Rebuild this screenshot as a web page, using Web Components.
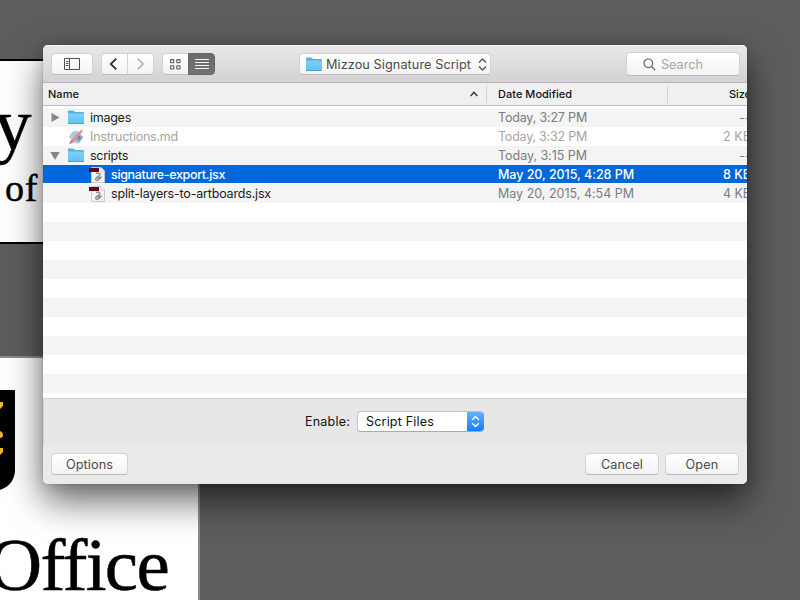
<!DOCTYPE html>
<html lang="en"><head><meta charset="utf-8"><title>Open Script</title>
<style>
html,body{margin:0;height:100%;overflow:hidden;background:#5d5d5d}
body{font:12.5px/19px Inter,"Liberation Sans",sans-serif;color:#1c1c1c;position:relative}
open-dialog{position:absolute;left:43px;top:45px}
</style></head><body>
<art-canvas></art-canvas>
<open-dialog></open-dialog>
<script>
const define=(name,html,init)=>customElements.define(name,class extends HTMLElement{
  connectedCallback(){
    if(this.shadowRoot)return;
    const t=document.createElement('template');t.innerHTML=html;
    this.attachShadow({mode:'open'}).append(t.content.cloneNode(true));
    if(init)init(this);
  }
});

/* Text run whose tracking is adjusted to the width given in "w". */
define('fit-text','<style>:host{display:inline-block;white-space:pre;flex:none}span{display:inline-block}</style><span><slot></slot></span>',el=>{
  const s=el.shadowRoot.querySelector('span'),w=+el.getAttribute('w');
  if(!w)return;
  const n=el.textContent.length;
  s.style.letterSpacing=((w-s.getBoundingClientRect().width)/n)+'px';
  el.style.width=w+'px';
});

define('folder-icon',`<style>:host{display:block;white-space:normal;width:16px;height:15px;flex:none}svg{display:block}</style>
<svg width="16" height="15"><defs><linearGradient id="g" x2="0" y2="1"><stop stop-color="#7dd0f8"/><stop offset="1" stop-color="#60c2f5"/></linearGradient></defs>
<path d="M0 1.5Q0 .5 1 .5H5.5L7 2H15Q16 2 16 3V14H0Z" fill="#58b0dc"/><path d="M0 3.5H16V13.2H0Z" fill="url(#g)"/><path d="M0 13.5H16" stroke="#4f9fc9"/></svg>`);

define('script-icon',`<style>:host{display:block;white-space:normal;width:16px;height:16px;flex:none}svg{display:block}</style>
<svg width="16" height="16"><path d="M2.5.5H12L15.5 4V15.5H2.5Z" fill="#f3f3f3" stroke="#c9c9c9"/><path d="M12 .5V4H15.5" fill="#fff" stroke="#bbb" stroke-width=".7"/><path d="M0 1H10V5H0Z" fill="#64001c"/>
<g fill="none" stroke="#888" stroke-width="1.3"><path d="M7 6.5Q11 5.5 11 8L7.5 10.5Q5.5 13 8 13.5Q10 13.5 12.5 9.5M8.5 12L11 9.5"/></g></svg>`);

define('markdown-icon',`<style>:host{display:block;white-space:normal;width:16px;height:16px;flex:none}svg{display:block}</style>
<svg width="16" height="16"><path d="M4 3L9 1.5 15.5 8 11 14.5 6 13.5 1 8Z" fill="#a9c9df"/><path d="M1 8L5 6 8 9 5 12Z" fill="#c1c9cf"/><path d="M9 7L13 6.5 14.5 9 11 13 8 11Z" fill="#7fa9c8"/><circle cx="11.3" cy="8.5" r="1.2" fill="#557e9f"/><path d="M13.2 .8L15 2 5.5 13 1.3 15.3 2.8 11.5Z" fill="#e98a8a"/><path d="M2.8 11.5L5 13.2 1.3 15.3Z" fill="#8c8588"/></svg>`);

define('push-button',`<style>:host{display:flex;align-items:center;justify-content:center;box-sizing:border-box;height:22px;border-radius:4px;border:1px solid #d3d2d3;border-bottom-color:#bcbbbc;background:linear-gradient(#fff,#f3f3f3);color:#4b4b4b;font-size:12.7px;flex:none}</style><slot></slot>`);

define('dialog-toolbar',`<style>
:host{display:flex;box-sizing:border-box;height:38px;padding:8px 7px 0 8px;border-bottom:1px solid #b5b2b5;background:linear-gradient(#ebe8eb,#d4d1d4);box-shadow:inset 0 1px #f5f3f5;align-items:flex-start}
svg{display:block;fill:none;flex:none}
.side{width:42px}.nav{width:27px;padding-right:2px}.back{margin-left:8px;border-radius:4px 0 0 4px}.fwd{margin-left:-1px;border-radius:0 4px 4px 0;padding-right:0}
.grid{margin-left:8px;width:26px;border-radius:4px 0 0 4px;border-right:0}
.list{width:27px;border-radius:0 4px 4px 0;background:linear-gradient(#6b696b,#747274);border-color:#666;}
.place{margin-left:84px;width:192px;gap:4px;justify-content:flex-start;box-sizing:border-box;padding-left:6px;border-radius:4px}
.search{margin-left:auto;width:114px;height:24px;justify-content:flex-start;padding-left:16px;gap:5px;color:#a6a6a6;margin-top:-1px}
</style>
<push-button class="side"><svg width="16" height="12" stroke="#505050"><path d="M.5.5H15.5V11.5H.5ZM5.5.5V11.5M2 3.5H4.5M2 5.5H4.5M2 7.5H4.5"/></svg></push-button>
<push-button class="nav back"><svg width="9" height="12" stroke="#353035" stroke-width="1.8"><path d="M7.3.6L1.8 6 7.3 11.4"/></svg></push-button>
<push-button class="nav fwd"><svg width="9" height="12" stroke="#b1b0b1" stroke-width="1.5"><path d="M1.7.6L7.2 6 1.7 11.4"/></svg></push-button>
<push-button class="grid"><svg width="11" height="11" stroke="#555" stroke-width="1.1"><rect x=".6" y=".6" width="3.2" height="3.2" rx=".5"/><rect x="6.8" y=".6" width="3.2" height="3.2" rx=".5"/><rect x=".6" y="6.8" width="3.2" height="3.2" rx=".5"/><rect x="6.8" y="6.8" width="3.2" height="3.2" rx=".5"/></svg></push-button>
<push-button class="list"><svg width="14" height="10" stroke="#f3f3f3"><path d="M0 .5H14M0 3.5H14M0 6.5H14M0 9.5H14"/></svg></push-button>
<push-button class="place"><folder-icon></folder-icon><fit-text w="145">Mizzou Signature Script</fit-text><svg width="9" height="13" stroke="#555" stroke-width="1.4" style="margin-left:3px"><path d="M1 4.5L4.5 1 8 4.5M1 8.5L4.5 12 8 8.5"/></svg></push-button>
<push-button class="search"><svg width="13" height="13" stroke="#606060" stroke-width="1.2"><circle cx="5.3" cy="5.3" r="4.3"/><path d="M8.5 8.5L12.2 12.2"/></svg><fit-text w="42">Search</fit-text></push-button>`);

define('column-header',`<style>
:host{display:flex;height:22px;border-bottom:1px solid #bdbdbd;background:#f0f0f0;font-size:11px;line-height:22px;color:#111;overflow:hidden;font-weight:450}
div{display:flex;flex:none;align-items:center;position:relative}
.n{width:443px;padding-left:5px;box-sizing:border-box}.n svg{margin-left:auto;margin-right:8px}
i{width:1px;height:18px;background:#d2d2d2;flex:none;align-self:center}
.d{width:180px;padding-left:11px;box-sizing:border-box}.s{padding-left:61px}
</style><div class="n"><fit-text w="31" style="font-weight:550">Name</fit-text><svg width="8" height="6" fill="none" stroke="#333" stroke-width="1.4"><path d="M.7 5L4 1.4 7.3 5"/></svg></div><i></i><div class="d"><fit-text w="74">Date Modified</fit-text></div><i></i><div class="s"><fit-text w="22">Size</fit-text></div>`);

define('file-row',`<style>
:host{display:flex;align-items:center;height:19px;overflow:hidden;white-space:pre;flex:none;background:#fff;color:#1b1b1b}
:host(:nth-child(odd)){background:#f4f4f4}
:host([selected]){background:linear-gradient(#0068da 18px,#fff 18px);color:#fff;font-weight:500}
.t{width:25px;flex:none;display:flex;justify-content:center;box-sizing:border-box;padding-right:1px}
.name{display:flex;align-items:center;width:430px;flex:none;gap:6px}
:host([child]) .name{padding-left:21px;width:409px}
.date{width:177px;flex:none;color:#7c7c7c}.size{width:76px;text-align:right;color:#7c7c7c;flex:none}
:host([dim]),:host([dim]) .date,:host([dim]) .size{color:#a4a4a4}
:host([selected]) .date,:host([selected]) .size{color:#fff}
svg{display:block;fill:#858585}
</style><div class="t"></div><div class="name"><slot name="icon"></slot><slot></slot></div><div class="date"><slot name="date"></slot></div><div class="size"><slot name="size"></slot></div>`,el=>{
  const a=el.getAttribute('arrow');
  if(a)el.shadowRoot.querySelector('.t').innerHTML='<svg width="10" height="9"><path d="'+(a==='open'?'M.3 1H9.7L5 9Z':'M1.5 0V9L9.5 4.5Z')+'"/></svg>';
});

define('file-list',`<style>:host{display:block;height:290px;padding-top:2px;background:#fff;overflow:hidden}.rows{display:flex;flex-direction:column}</style><div class="rows">
<file-row arrow="closed"><folder-icon slot="icon"></folder-icon><fit-text w="41">images</fit-text><fit-text slot="date" w="89">Today, 3:27 PM</fit-text><fit-text slot="size" w="12">--</fit-text></file-row>
<file-row dim><markdown-icon slot="icon"></markdown-icon><fit-text w="88">Instructions.md</fit-text><fit-text slot="date" w="89">Today, 3:32 PM</fit-text><fit-text slot="size" w="28">2 KB</fit-text></file-row>
<file-row arrow="open"><folder-icon slot="icon"></folder-icon><fit-text w="38">scripts</fit-text><fit-text slot="date" w="89">Today, 3:15 PM</fit-text><fit-text slot="size" w="12">--</fit-text></file-row>
<file-row child selected><script-icon slot="icon"></script-icon><fit-text w="114">signature-export.jsx</fit-text><fit-text slot="date" w="136">May 20, 2015, 4:28 PM</fit-text><fit-text slot="size" w="28">8 KB</fit-text></file-row>
<file-row child><script-icon slot="icon"></script-icon><fit-text w="160">split-layers-to-artboards.jsx</fit-text><fit-text slot="date" w="136">May 20, 2015, 4:54 PM</fit-text><fit-text slot="size" w="28">4 KB</fit-text></file-row>
${'<file-row></file-row>'.repeat(11)}</div>`);

define('popup-select',`<style>:host{display:flex;box-sizing:border-box;width:127px;height:21px;border:1px solid #c2c2c2;border-bottom-color:#aaa;border-radius:4px;background:#fff;overflow:hidden;align-items:center;padding-left:8px;border-right:0}
div{margin-left:auto;width:17px;height:21px;margin-block:-1px;background:linear-gradient(#6bb3fa,#087dff);display:flex;align-items:center;justify-content:center}</style><slot></slot><div><svg width="9" height="13" fill="none" stroke="#fff" stroke-width="1.5"><path d="M1.2 4.7L4.5 1.5 7.8 4.7M1.2 8.3L4.5 11.5 7.8 8.3"/></svg></div>`);

define('enable-bar',`<style>:host{display:flex;box-sizing:border-box;height:47px;border:solid #d0d0d0;border-width:1px 1px 0;background:#e7e7e7;padding:12px 0 0 261px;gap:7px;align-items:flex-start;line-height:21px;color:#111}</style><fit-text w="45">Enable:</fit-text><popup-select><fit-text w="68">Script Files</fit-text></popup-select>`);

define('dialog-footer',`<style>:host{display:flex;height:39px;box-sizing:border-box;padding:8px 8px 0;background:#eaeaea;gap:6px}.o{width:77px;margin-right:auto}.b{width:74px}</style><push-button class="o"><fit-text w="47">Options</fit-text></push-button><push-button class="b"><fit-text w="42">Cancel</fit-text></push-button><push-button class="b"><fit-text w="33">Open</fit-text></push-button>`);

define('open-dialog',`<style>:host{display:block;width:704px;height:439px;border-radius:5px;box-shadow:0 0 1px rgba(0,0,0,.5),0 17px 36px rgba(0,0,0,.6),0 2px 14px rgba(0,0,0,.12)}section{display:flex;flex-direction:column;overflow:hidden;border-radius:5px;height:439px;background:#eaeaea}section>*{flex-shrink:0}</style><section><dialog-toolbar></dialog-toolbar><column-header></column-header><file-list></file-list><enable-bar></enable-bar><dialog-footer></dialog-footer></section>`);

define('art-canvas',`<style>
:host{display:block;position:absolute;inset:0;overflow:hidden;background:#5d5d5d;color:#000;font-family:"Liberation Serif",serif;-webkit-text-stroke:.5px #000}
.b{position:absolute;background:#fff;box-sizing:border-box}
.one{left:-20px;top:59px;width:320px;height:185px;border:solid #000;border-width:2px}
.two{left:-20px;top:356px;width:220px;height:260px;border:2px solid #8b8b8b}
fit-text{position:absolute;line-height:1}
svg{position:absolute;left:0;top:390px}
</style><div class="b one"></div><div class="b two"></div>
<fit-text style="left:-6px;top:86px;font-size:75px">y</fit-text>
<fit-text style="left:5px;top:169px;font-size:38px" w="33">of</fit-text>
<svg width="16" height="102"><path d="M0 0H15V81Q14 95 0 100Z"/><g fill="#f1b42f"><path d="M0 12H3V16L0 19ZM0 41Q3 42 3 45Q3 48 0 48ZM0 58H3V62L0 65Z"/></g></svg>
<fit-text style="left:-12px;top:527px;font-size:75px" w="180">Office</fit-text>`);
</script></body></html>
